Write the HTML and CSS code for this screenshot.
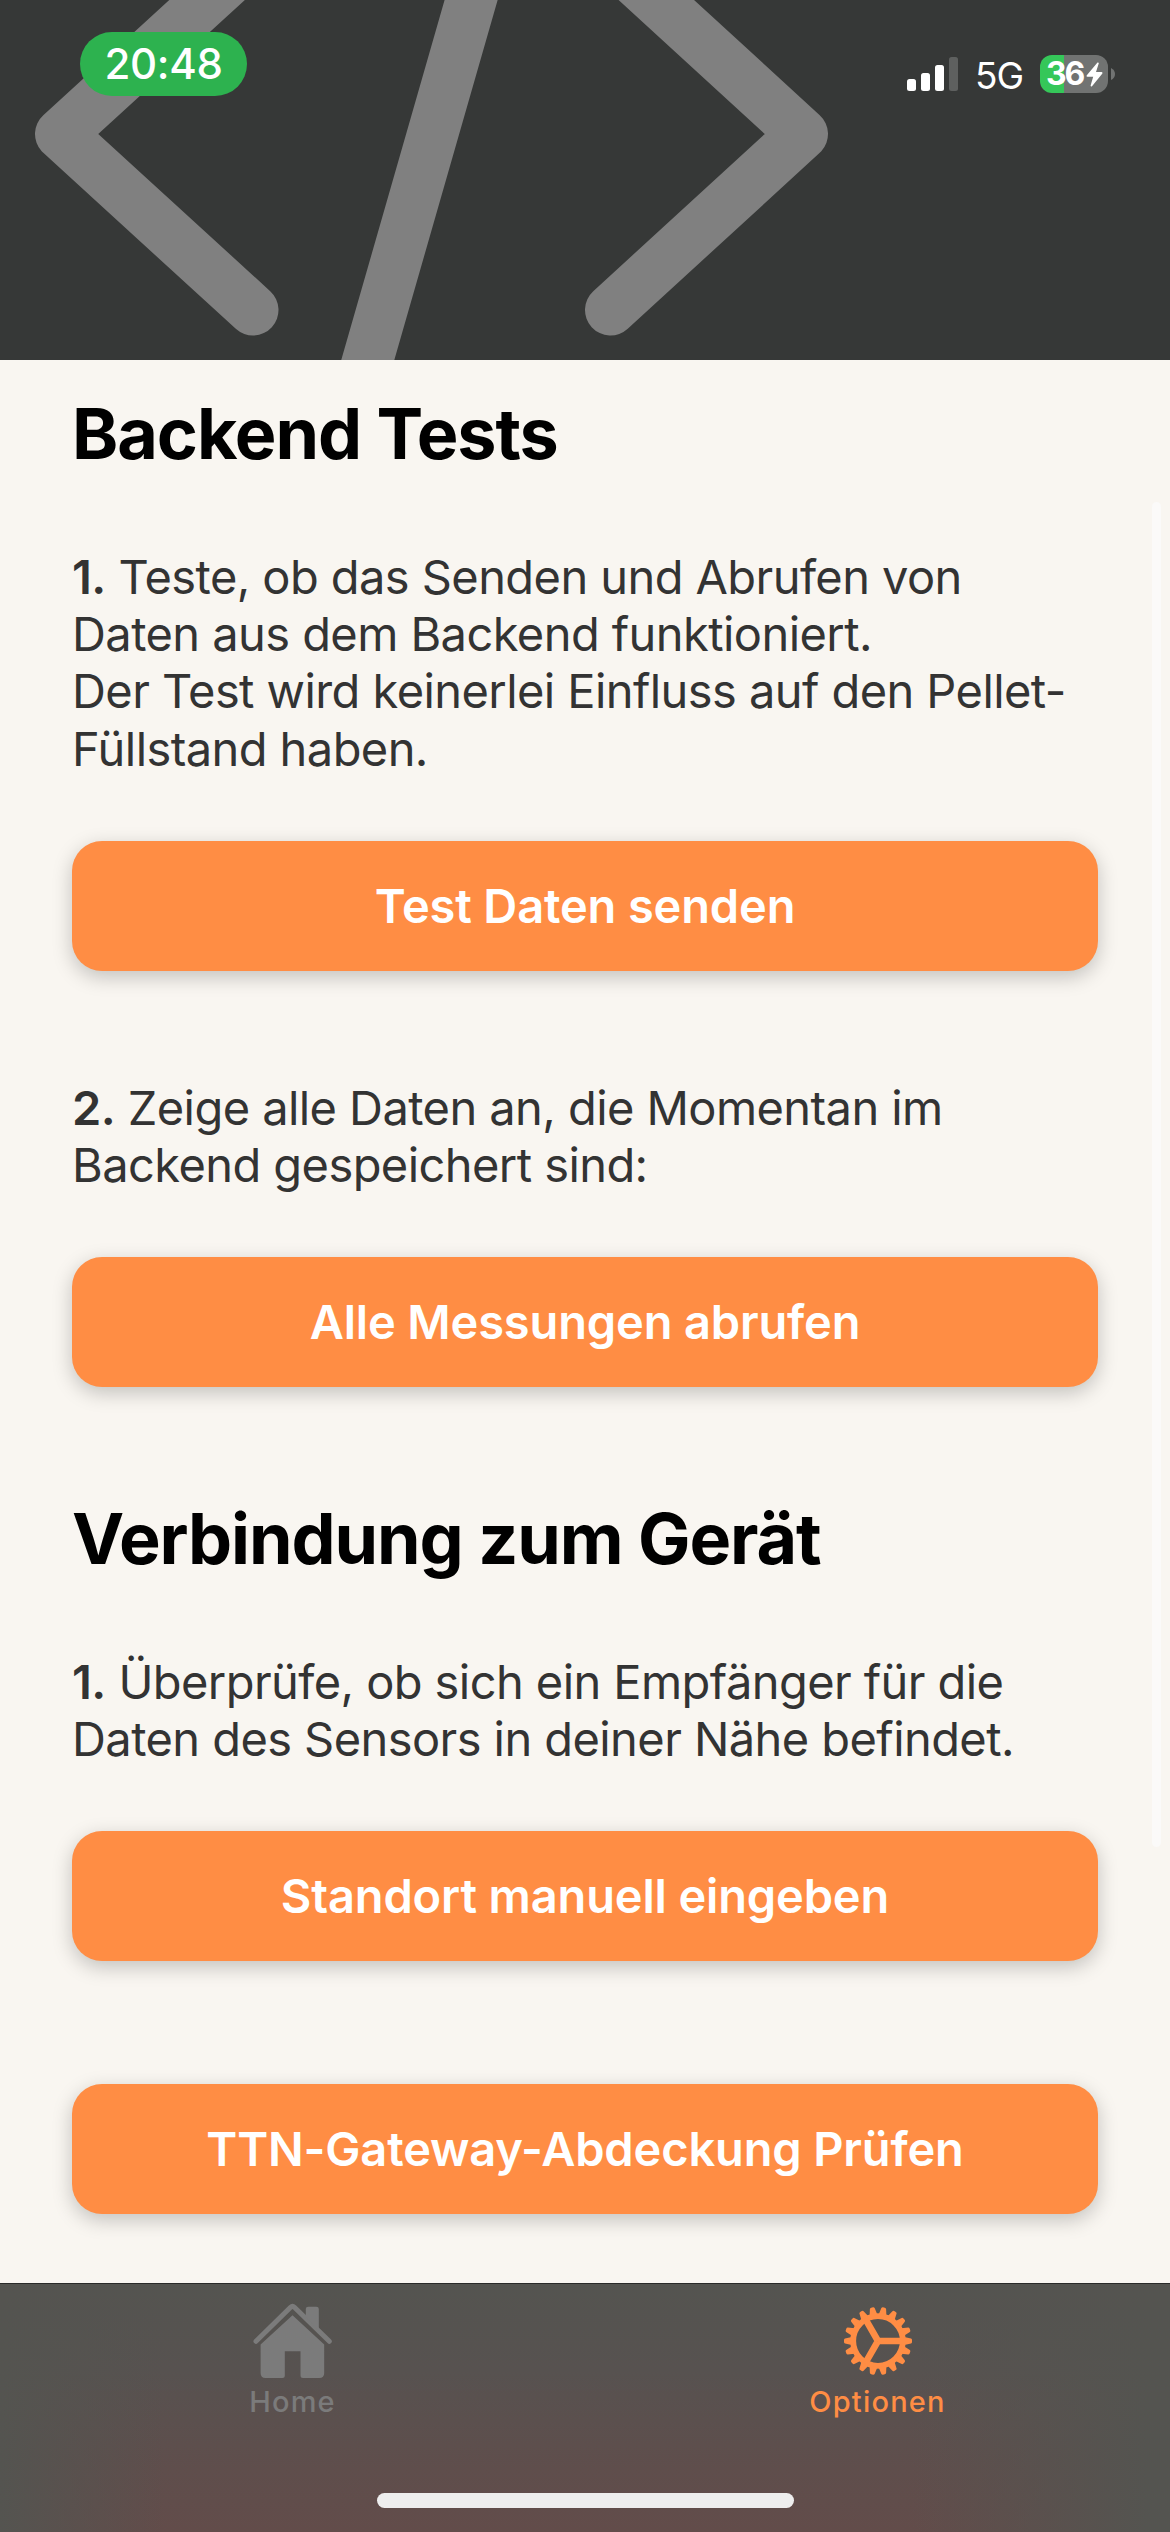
FILE: index.html
```html
<!DOCTYPE html>
<html lang="de">
<head>
<meta charset="utf-8">
<title>Optionen</title>
<link rel="stylesheet" href="styles.css">
</head>
<body>
<div class="app">
  <header class="hero">
    <svg class="hero-art" viewBox="0 0 1170 360" fill="none" stroke="#808080" stroke-width="51" stroke-linejoin="round" stroke-linecap="round">
      <path d="M253 -42 L60.5 134 L253 310"/>
      <path d="M610.5 -42 L802.5 134 L610.5 310"/>
      <path d="M482.6 -40 L356.3 400"/>
    </svg>
    <div class="status">
      <span class="clock">20:48</span>
      <div class="indicators">
        <svg class="signal" viewBox="0 0 51 34" fill="#fff">
          <rect x="0" y="22" width="9" height="12" rx="2.5"/>
          <rect x="14" y="16" width="9" height="18" rx="2.5"/>
          <rect x="28" y="8" width="9" height="26" rx="2.5"/>
          <rect x="42" y="0" width="9" height="34" rx="2.5" fill="#5e605f"/>
        </svg>
        <span class="network">5G</span>
        <div class="battery">
          <span class="level">36</span>
          <svg class="bolt" viewBox="0 0 17 25" fill="#fff"><path d="M11.5 .6 L.6 13.4 Q.2 14.6 1.4 14.7 H7.2 L4.6 23.6 Q4.8 25 6 24.2 L16.4 11.4 Q16.9 10.3 15.6 10.1 H10 L12.8 1.2 Q12.5 0 11.5 .6Z"/></svg>
        </div>
        <svg class="nub" viewBox="0 0 4 12" fill="#717372"><path d="M0 0 Q4 2 4 6 Q4 10 0 12Z"/></svg>
      </div>
    </div>
  </header>
  <main class="content">
    <h1 class="title">Backend Tests</h1>
    <p class="text long"><b>1.</b> Teste, ob das Senden und Abrufen von<br>Daten aus dem Backend funktioniert.<br>Der Test wird keinerlei Einfluss auf den Pellet-<br>Füllstand haben.</p>
    <button class="btn">Test Daten senden</button>
    <p class="text second"><b>2.</b> Zeige alle Daten an, die Momentan im<br>Backend gespeichert sind:</p>
    <button class="btn">Alle Messungen abrufen</button>
    <h1 class="title later">Verbindung zum Gerät</h1>
    <p class="text"><b>1.</b> Überprüfe, ob sich ein Empfänger für die<br>Daten des Sensors in deiner Nähe befindet.</p>
    <button class="btn">Standort manuell eingeben</button>
    <button class="btn last">TTN-Gateway-Abdeckung Prüfen</button>
    <div class="scrollbar"></div>
  </main>
  <nav class="tabs">
    <div class="tab home">
      <svg class="icon" viewBox="0 0 80 80" fill="currentColor">
        <path d="M3 40.3 L37.6 6.3 Q39.5 4.6 41.4 6.3 L76.3 40.3" fill="none" stroke="currentColor" stroke-width="5" stroke-linecap="round" stroke-linejoin="round"/>
        <path d="M52.8 16 V8 Q52.8 5.7 55.2 5.7 H63.4 Q65.8 5.7 65.8 8 V30Z"/>
        <path d="M39.5 14.3 L71.2 43.4 V72 Q71.2 77 66.2 77 H50 Q47.5 77 47.5 74.5 V50.3 H31.8 V74.5 Q31.8 77 29.3 77 H12.5 Q7.6 77 7.6 72 V43.4Z"/>
      </svg>
      <span class="label">Home</span>
    </div>
    <div class="tab options">
      <svg class="icon" viewBox="-40 -40 80 80" fill="currentColor">
        <defs><path id="tooth" d="M26 -4 L28.5 -3.4 L33 -2.4 Q34 -2 34 -.9 V.9 Q34 2 33 2.4 L28.5 3.4 L26 4Z"/></defs>
        <circle r="24.8" fill="none" stroke="currentColor" stroke-width="5.8"/>
        <path d="M0 0 H24 M0 0 L-12 -20.8 M0 0 L-12 20.8" stroke="currentColor" stroke-width="6.6"/>
        <use href="#tooth"/><use href="#tooth" transform="rotate(20)"/><use href="#tooth" transform="rotate(40)"/><use href="#tooth" transform="rotate(60)"/><use href="#tooth" transform="rotate(80)"/><use href="#tooth" transform="rotate(100)"/><use href="#tooth" transform="rotate(120)"/><use href="#tooth" transform="rotate(140)"/><use href="#tooth" transform="rotate(160)"/><use href="#tooth" transform="rotate(180)"/><use href="#tooth" transform="rotate(200)"/><use href="#tooth" transform="rotate(220)"/><use href="#tooth" transform="rotate(240)"/><use href="#tooth" transform="rotate(260)"/><use href="#tooth" transform="rotate(280)"/><use href="#tooth" transform="rotate(300)"/><use href="#tooth" transform="rotate(320)"/><use href="#tooth" transform="rotate(340)"/>
      </svg>
      <span class="label">Optionen</span>
    </div>
    <div class="home-indicator"></div>
  </nav>
</div>
</body>
</html>
```
FILE: styles.css
```css
* { box-sizing: border-box; margin: 0; }
body { font-family: Inter, "Liberation Sans", sans-serif; background: #f9f6f1; }
.app { width: 1170px; height: 2532px; display: flex; flex-direction: column; overflow: hidden; }

.hero { position: relative; height: 360px; flex: none; background: #363837; }
.hero-art { position: absolute; inset: 0; width: 1170px; height: 360px; }
.status { position: relative; display: flex; justify-content: space-between; align-items: flex-start; padding: 32px 55px 0 80px; color: #fff; }
.clock { width: 167px; height: 64px; border-radius: 32px; background: #2db24f; font-size: 42px; font-weight: 500; line-height: 64px; letter-spacing: -.3px; text-align: center; }
.indicators { display: flex; align-items: center; height: 38px; margin-top: 23px; }
.signal { width: 51px; height: 34px; }
.network { width: 50px; margin: 3px 15px 0 17px; font-size: 37px; line-height: 38px; letter-spacing: -1px; }
.battery { display: flex; align-items: center; width: 68px; height: 38px; padding-left: 6px; border-radius: 12px; background: linear-gradient(90deg, #35c759 24px, #717372 24px); }
.level { width: 40px; font-size: 32px; font-weight: 700; line-height: 38px; letter-spacing: -2.2px; }
.bolt { width: 17px; height: 25px; }
.nub { width: 4px; height: 12px; margin-left: 3px; }

.content { position: relative; height: 1923px; flex: none; display: flex; flex-direction: column; padding: 32px 72px 0; }
.title { height: 84px; font-size: 70px; font-weight: 700; line-height: 84px; letter-spacing: -1.08px; color: #000; white-space: nowrap; }
.title.later { margin-top: 110px; }
.text { height: 115px; margin-top: 72px; font-size: 47px; line-height: 57.2px; letter-spacing: -.57px; color: #333; white-space: nowrap; }
.text.long { height: 230px; }
.text b { font-weight: 600; }
.text.second { margin-top: 108px; }
.btn { flex: none; height: 130px; margin-top: 63px; padding: 0; border: 0; border-radius: 30px; background: #ff8d44; box-shadow: 0 6px 20px rgba(0, 0, 0, .22); color: #fff; font: 600 47px/130px Inter, sans-serif; letter-spacing: -.15px; text-align: center; }
.btn.last { margin-top: 123px; }
.scrollbar { position: absolute; left: 1152px; top: 142px; width: 9px; height: 1345px; border-radius: 5px; background: #fbfaf9; }

.tabs {
  position: relative; flex: 1; display: flex; border-top: 1px solid #2a2a29;
  background:
    linear-gradient(90deg, #545450 0%, rgba(84, 84, 80, 0) 14%, rgba(84, 84, 80, 0) 78%, #545450 98%),
    linear-gradient(180deg, #545450 0%, #575250 35%, #5f4e4c 75%, #624c4a 100%);
}
.tab { flex: 1; display: flex; flex-direction: column; align-items: center; padding-top: 17px; }
.icon { width: 80px; height: 80px; }
.label { font-size: 29px; font-weight: 450; line-height: 36px; letter-spacing: 1.2px; margin-top: 3px; }
.home { color: #7b7b7b; }
.options { color: #ff8d44; }
.home-indicator { position: absolute; left: 377px; bottom: 24px; width: 417px; height: 15px; border-radius: 8px; background: #eee; }
```
